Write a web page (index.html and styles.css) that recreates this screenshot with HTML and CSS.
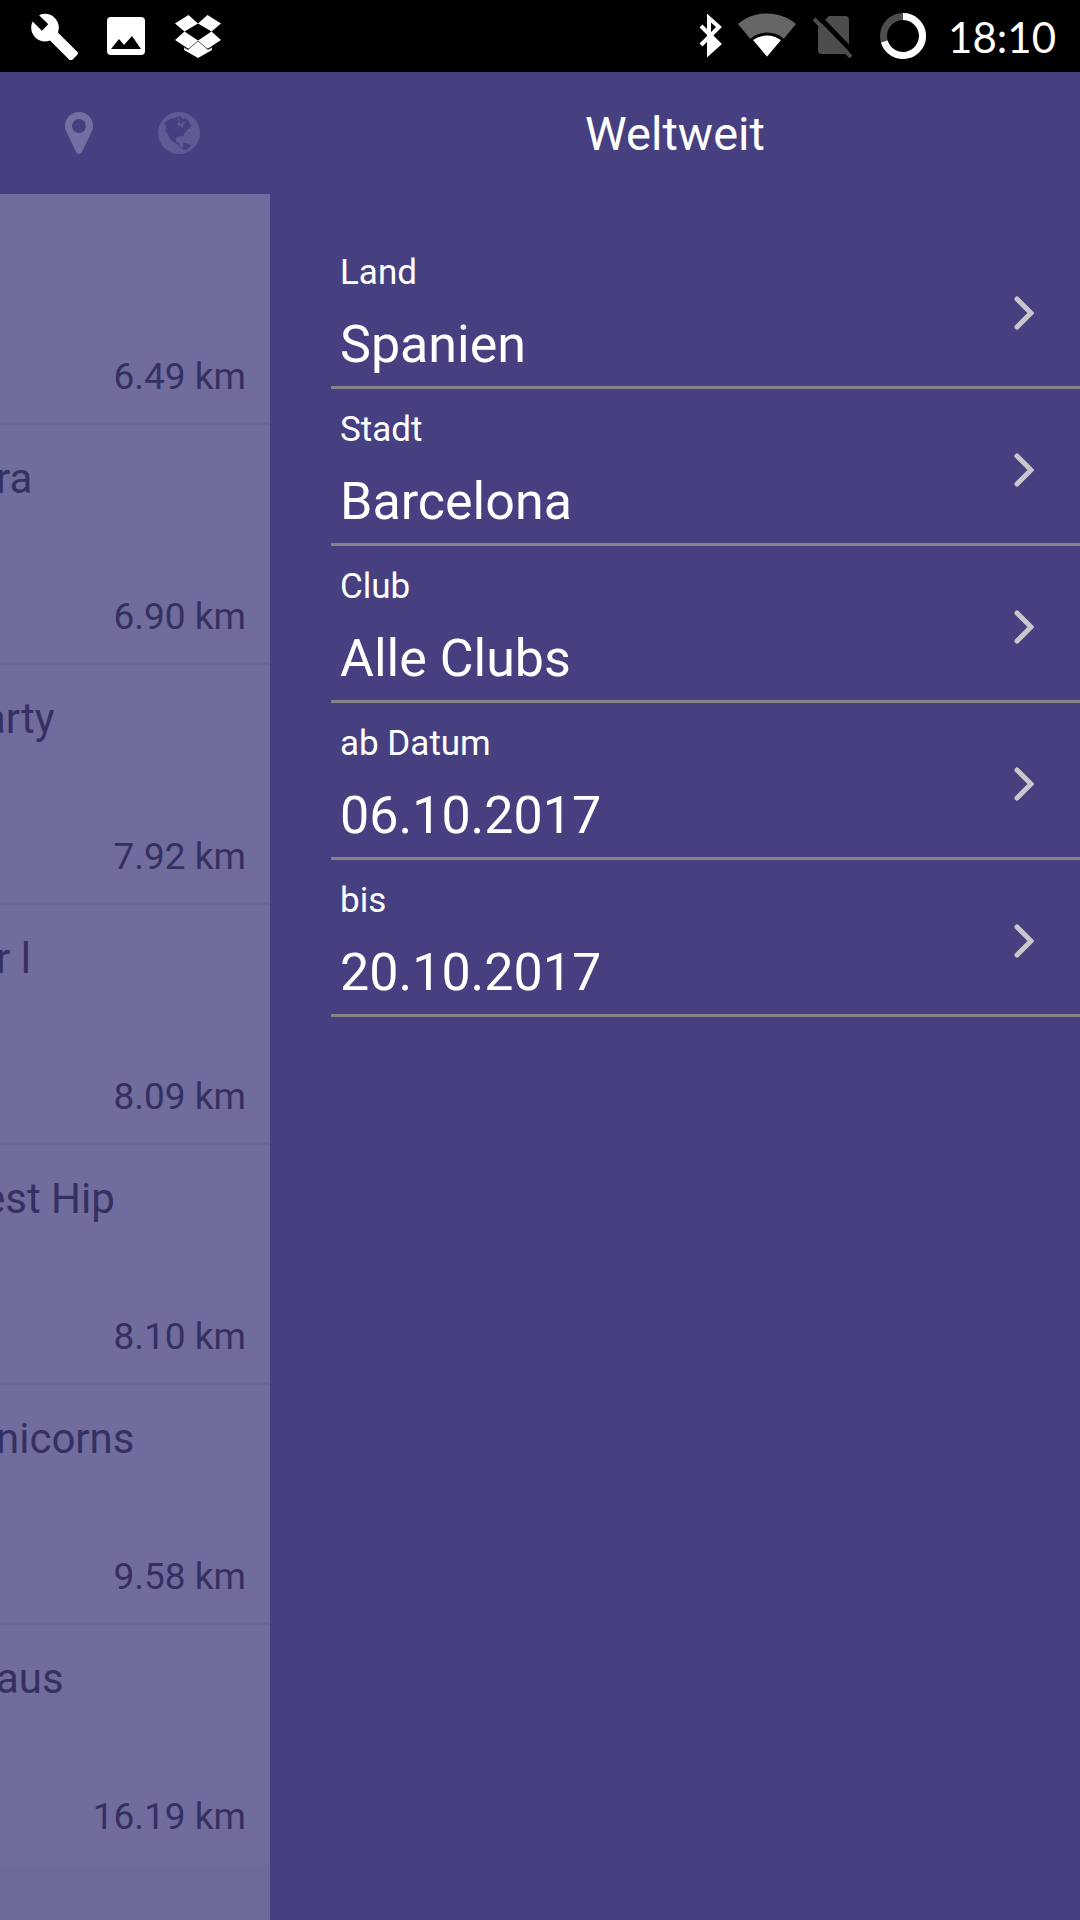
FILE: index.html
```html
<!DOCTYPE html>
<html lang="de">
<head>
    <meta charset="UTF-8">
    <meta name="viewport" content="width=device-width, initial-scale=1.0">
    <title>Weltweit</title>
    <link rel="stylesheet" href="styles.css">
</head>
<body>
    <div class="status-bar">
        <div class="status-left">
            <svg class="status-icon" viewBox="0 0 48 48" fill="#fff">
                <path d="M47.2 39.8 27.900 20.500c1.900-4.900 .9-10.600-3.100-14.600C20.600 1.600 14.200 .8 9.100 3.200l9.200 9.100-6.400 6.400-9.300-9.100C0 14.700 1 21.100 5.300 25.400c4 4 9.800 5 14.700 3.100l19.300 19.200c.9.9 2.200.9 3.100 0l4.900-4.900c.9-.8.9-2.200-.1-3z"/>
            </svg>
            <svg class="status-icon" viewBox="0 0 48 48">
                <rect x="5" y="5" width="38" height="38" rx="4" fill="#fff"/>
                <path d="M9 37l8-10 5 6 8-9 9 13z" fill="#000"/>
            </svg>
            <svg class="status-icon" viewBox="0 0 48 48" fill="#fff">
                <path d="M14.500 3l9.500 8.500-13.500 8L1 11.500zM33.500 3L47 11.500l-9.500 8L24 11.500zM10.500 19.500L24 28.500v6l-10 2L1 28zM37.500 19.500L47 28l-13 8.500-10-2v-6z"/>
                <path d="M10 35.500l4 2 10-8.500 10 8.500 4-2V38L24 46 10 38z"/>
                <path d="M10 35.500l4 2 10-8.500 10 8.500 4-2" fill="none" stroke="#555"/>
            </svg>
        </div>
        <div class="status-right">
            <svg class="bluetooth" viewBox="0 0 24 44">
                <path d="M3 12l18 18-10 9V4l10 9L3 31" fill="none" stroke="#fff" stroke-width="4"/>
                <path d="M9 22l12 7-12 12z" fill="#fff"/>
            </svg>
            <svg class="wifi" viewBox="0 0 58 46">
                <path d="M29 46L0 11C16-3 42-3 58 11z" fill="#666"/>
                <path d="M29 46L13 27C22 19 36 19 45 27z" fill="#fff" stroke="#000" stroke-width="3"/>
            </svg>
            <svg class="no-sim" viewBox="0 0 40 44">
                <path d="M16 2h16q4 0 4 4v30q0 4-4 4H9q-4 0-4-4V13z" fill="#4d4d4d"/>
                <path d="M4 1l36 37" stroke="#000" stroke-width="5"/>
                <path d="M1 5l37 38" stroke="#4d4d4d" stroke-width="4"/>
            </svg>
            <svg class="battery" viewBox="0 0 46 46" fill="none" stroke-width="7">
                <circle cx="23" cy="23" r="19.500" stroke="#4d4d4d"/>
                <path d="M23 3.500a19.500 19.500 0 1 1-18.700 25" stroke="#fff"/>
            </svg>
            <time class="clock">18:10</time>
        </div>
    </div>

    <div class="app">
        <main class="events">
            <div class="toolbar">
                <button type="button" class="tool" aria-label="Karte">
                    <svg viewBox="0 0 42 42" fill="#736fa0">
                        <path fill-rule="evenodd" d="M21 0a14 14 0 0 1 14 14c0 3-1 5-2 7l-9 19q-3 4-6 0L9 21c-1-2-2-4-2-7A14 14 0 0 1 21 0zm0 7a7 7 0 1 0 0 14 7 7 0 0 0 0-14z"/>
                    </svg>
                </button>
                <button type="button" class="tool" aria-label="Weltweit">
                    <svg viewBox="0 0 42 42">
                        <circle cx="21" cy="21" r="21" fill="#5f5a91"/>
                        <path fill="#464081" d="M6 12l3-3 3-2 5-1 2-1 2 1-2 2 3 1-2 2-1 2 4 1 1 2 1-2 1-3 2 0 2 1 1-1 3 3-2 0 1 2-3 1-2 3-2 2-1 3-1-1-4 1-2 1 0 4 3 1 1 4 2 1-2 0-3-4-5-3-3-4-1-3-3-3 1-5-1-2z"/>
                        <path fill="#464081" d="M19 5l4-1 1 3 3 0-1-2 2 1 3 4 0 2-3 0-2-3-3 3-2-4zM25 31l3 0 2 1 3 1-1 2-3 2-2 1-3-1 1-3z"/>
                    </svg>
                </button>
            </div>
            <ul class="event-list">
                <li class="event"><span class="distance">6.49 km</span></li>
                <li class="event"><h2 class="event-title">ra</h2><span class="distance">6.90 km</span></li>
                <li class="event"><h2 class="event-title event-title-long">arty</h2><span class="distance">7.92 km</span></li>
                <li class="event"><h2 class="event-title">r l</h2><span class="distance">8.09 km</span></li>
                <li class="event"><h2 class="event-title event-title-long">est Hip</h2><span class="distance">8.10 km</span></li>
                <li class="event"><h2 class="event-title">nicorns</h2><span class="distance">9.58 km</span></li>
                <li class="event"><h2 class="event-title">aus</h2><span class="distance">16.19 km</span></li>
            </ul>
        </main>

        <aside class="drawer">
            <h1 class="drawer-title">Weltweit</h1>
            <div class="filters">
                <button type="button" class="filter">
                    <span class="filter-text"><span class="filter-label">Land</span><span class="filter-value">Spanien</span></span>
                    <svg class="chevron" viewBox="0 0 20 34"><path d="M3 3l14 14L3 31"/></svg>
                </button>
                <button type="button" class="filter">
                    <span class="filter-text"><span class="filter-label">Stadt</span><span class="filter-value">Barcelona</span></span>
                    <svg class="chevron" viewBox="0 0 20 34"><path d="M3 3l14 14L3 31"/></svg>
                </button>
                <button type="button" class="filter">
                    <span class="filter-text"><span class="filter-label">Club</span><span class="filter-value">Alle Clubs</span></span>
                    <svg class="chevron" viewBox="0 0 20 34"><path d="M3 3l14 14L3 31"/></svg>
                </button>
                <button type="button" class="filter">
                    <span class="filter-text"><span class="filter-label">ab Datum</span><span class="filter-value">06.10.2017</span></span>
                    <svg class="chevron" viewBox="0 0 20 34"><path d="M3 3l14 14L3 31"/></svg>
                </button>
                <button type="button" class="filter">
                    <span class="filter-text"><span class="filter-label">bis</span><span class="filter-value">20.10.2017</span></span>
                    <svg class="chevron" viewBox="0 0 20 34"><path d="M3 3l14 14L3 31"/></svg>
                </button>
            </div>
        </aside>
    </div>
</body>
</html>
```

FILE: styles.css
```css
* {
    margin: 0;
    padding: 0;
    box-sizing: border-box;
}

body {
    font-family: Roboto, sans-serif;
    background: #464081;
    color: #fff;
    min-height: 100vh;
    display: flex;
    flex-direction: column;
}

button {
    font: inherit;
    color: inherit;
    background: none;
    border: none;
    cursor: pointer;
}

svg {
    display: block;
    flex-shrink: 0;
}

/* Status bar */
.status-bar {
    display: flex;
    justify-content: space-between;
    align-items: center;
    height: 72px;
    padding: 0 24px 0 30px;
    background: #000;
}

.status-left {
    display: flex;
    gap: 24px;
}

.status-icon {
    width: 48px;
    height: 48px;
}

.status-right {
    display: flex;
    align-items: center;
}

.bluetooth {
    width: 24px;
    height: 44px;
    margin-right: 16px;
}

.wifi {
    width: 58px;
    height: 46px;
    margin-right: 17px;
}

.no-sim {
    width: 40px;
    height: 44px;
    margin-right: 27px;
}

.battery {
    width: 46px;
    height: 46px;
    margin-right: 22px;
}

.clock {
    font-family: Lato, sans-serif;
    font-size: 42px;
    line-height: 72px;
    padding-top: 2px;
}

/* Two columns: the page behind and the filter drawer */
.app {
    flex: 1;
    display: grid;
    grid-template-columns: 1fr 3fr;
}

.events {
    display: flex;
    flex-direction: column;
    min-width: 0;
    overflow: hidden;
}

.toolbar {
    display: flex;
    justify-content: flex-end;
    align-items: center;
    gap: 58px;
    height: 122px;
    padding-right: 70px;
}

.tool,
.tool svg {
    width: 42px;
    height: 42px;
}

.event-list {
    flex: 1;
    list-style: none;
    background: #6d699b;
}

.event {
    display: flex;
    flex-direction: column;
    height: 240px;
    padding: 29px 24px 23px 0;
    background: #706c9d;
    border-bottom: 3px solid #6b6699;
    color: #353062;
}

.event:first-child {
    height: 231px;
}

.event:last-child {
    border-bottom-color: #706c9d;
}

.event-title {
    font-size: 42px;
    font-weight: 400;
    line-height: 50px;
    margin-left: -4px;
    white-space: nowrap;
}

.event-title-long {
    margin-left: -17px;
}

.distance {
    margin-top: auto;
    font-size: 37px;
    line-height: 44px;
    text-align: right;
}

/* Filter drawer */
.drawer-title {
    font-size: 47px;
    font-weight: 400;
    line-height: 124px;
    text-align: center;
}

.filters {
    padding: 36px 0 0 61px;
}

.filter {
    display: flex;
    justify-content: space-between;
    align-items: center;
    width: 100%;
    height: 157px;
    padding: 8px 46px 0 9px;
    border-bottom: 3px solid #848484;
    text-align: left;
}

.filter-text {
    display: flex;
    flex-direction: column;
    gap: 13px;
}

.filter-label {
    font-size: 35px;
    line-height: 50px;
}

.filter-value {
    font-size: 52px;
    line-height: 68px;
}

.chevron {
    width: 20px;
    height: 34px;
    fill: none;
    stroke: #c8c8cc;
    stroke-width: 5;
    stroke-linecap: round;
}
```
